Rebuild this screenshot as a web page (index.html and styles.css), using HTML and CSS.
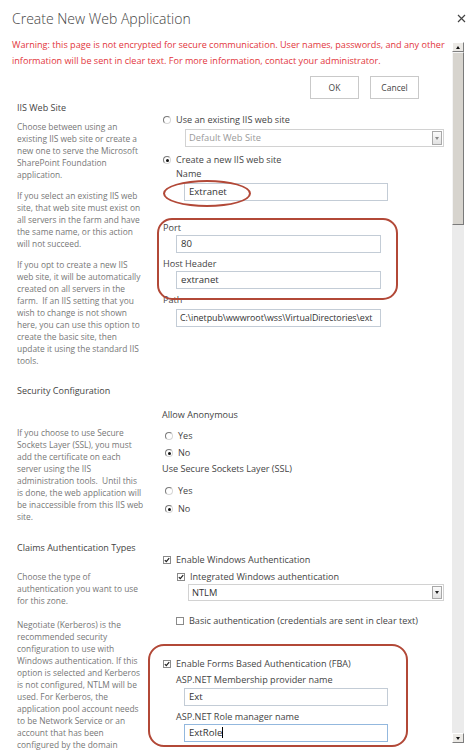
FILE: index.html
```html
<!DOCTYPE html>
<html lang="en">
<head>
<meta charset="utf-8">
<title>Create New Web Application</title>
<link rel="stylesheet" href="styles.css">
</head>
<body>
<div class="dialog">
  <header class="titlebar">
    <h1 class="title">Create New Web Application</h1>
    <svg class="close" width="9" height="9" viewBox="0 0 9 9"><path d="M1 1L8 8M8 1L1 8" stroke="#444" stroke-width="1.2" fill="none"/></svg>
  </header>
  <div class="frame">
    <div class="content">
      <p class="warning">Warning: this page is not encrypted for secure communication. User names, passwords, and any other<br>information will be sent in clear text. For more information, contact your administrator.</p>
      <div class="actions">
        <button class="btn">OK</button>
        <button class="btn">Cancel</button>
      </div>

      <section class="section sec-iis">
        <div class="desc">
          <h2>IIS Web Site</h2>
          <p class="p-first">Choose between using an<br>existing IIS web site or create a<br>new one to serve the Microsoft<br>SharePoint Foundation<br>application.</p>
          <p class="p-next">If you select an existing IIS web<br>site, that web site must exist on<br>all servers in the farm and have<br>the same name, or this action<br>will not succeed.</p>
          <p class="p-next">If you opt to create a new IIS<br>web site, it will be automatically<br>created on all servers in the<br>farm.&nbsp; If an IIS setting that you<br>wish to change is not shown<br>here, you can use this option to<br>create the basic site, then<br>update it using the standard IIS<br>tools.</p>
        </div>
        <div class="fields">
          <div class="opt opt-existing"><span class="radio"></span>Use an existing IIS web site</div>
          <div class="select select-site is-disabled"><span>Default Web Site</span><span class="sel-arrow"></span></div>
          <div class="opt opt-new"><span class="radio checked"></span>Create a new IIS web site</div>
          <div class="label label-name">Name</div>
          <div class="textbox tb-name">Extranet</div>
          <div class="label label-port">Port</div>
          <div class="textbox tb-wide tb-port">80</div>
          <div class="label label-host">Host Header</div>
          <div class="textbox tb-wide tb-port">extranet</div>
          <div class="label label-path">Path</div>
          <div class="textbox tb-wide tb-path">C:\inetpub\wwwroot\wss\VirtualDirectories\ext</div>
          <div class="mark mark-ellipse"></div>
          <div class="mark mark-box1"></div>
        </div>
      </section>

      <section class="section sec-security">
        <div class="desc">
          <h2>Security Configuration</h2>
          <p class="p-sec">If you choose to use Secure<br>Sockets Layer (SSL), you must<br>add the certificate on each<br>server using the IIS<br>administration tools.&nbsp; Until this<br>is done, the web application will<br>be inaccessible from this IIS web<br>site.</p>
        </div>
        <div class="fields">
          <div class="label label-anon">Allow Anonymous</div>
          <div class="opt opt-yes1"><span class="radio"></span>Yes</div>
          <div class="opt opt-no1"><span class="radio checked"></span>No</div>
          <div class="label label-ssl">Use Secure Sockets Layer (SSL)</div>
          <div class="opt opt-yes2"><span class="radio"></span>Yes</div>
          <div class="opt opt-no2"><span class="radio checked"></span>No</div>
        </div>
      </section>

      <section class="section sec-claims">
        <div class="desc">
          <h2>Claims Authentication Types</h2>
          <p class="p-claims1">Choose the type of<br>authentication you want to use<br>for this zone.</p>
          <p class="p-claims2">Negotiate (Kerberos) is the<br>recommended security<br>configuration to use with<br>Windows authentication. If this<br>option is selected and Kerberos<br>is not configured, NTLM will be<br>used. For Kerberos, the<br>application pool account needs<br>to be Network Service or an<br>account that has been<br>configured by the domain<br>administrator. NTLM</p>
        </div>
        <div class="fields">
          <div class="opt opt-win"><span class="check on"><svg viewBox="0 0 6 6" width="6" height="6"><path d="M0.8 3.1L2.3 4.6L5.2 1.1" stroke="#222" stroke-width="1.2" fill="none"/></svg></span>Enable Windows Authentication</div>
          <div class="opt opt-integrated"><span class="check on"><svg viewBox="0 0 6 6" width="6" height="6"><path d="M0.8 3.1L2.3 4.6L5.2 1.1" stroke="#222" stroke-width="1.2" fill="none"/></svg></span>Integrated Windows authentication</div>
          <div class="select select-ntlm"><span>NTLM</span><span class="sel-arrow"></span></div>
          <div class="opt opt-basic"><span class="check"></span>Basic authentication (credentials are sent in clear text)</div>
          <div class="opt opt-fba"><span class="check on"><svg viewBox="0 0 6 6" width="6" height="6"><path d="M0.8 3.1L2.3 4.6L5.2 1.1" stroke="#222" stroke-width="1.2" fill="none"/></svg></span>Enable Forms Based Authentication (FBA)</div>
          <div class="label label-member">ASP.NET Membership provider name</div>
          <div class="textbox tb-name tb-member">Ext</div>
          <div class="label label-role">ASP.NET Role manager name</div>
          <div class="textbox tb-name tb-role is-focused">ExtRole<span class="caret"></span></div>
          <div class="mark mark-box2"></div>
        </div>
      </section>
    </div>
    <div class="scrollbar">
      <div class="sb-btn sb-up"></div>
      <div class="sb-thumb"></div>
      <div class="sb-track"></div>
      <div class="sb-btn sb-down"></div>
    </div>
  </div>
</div>
</body>
</html>
```

FILE: styles.css
```css
* { box-sizing: border-box; }
html, body { margin: 0; padding: 0; }
body {
  width: 474px;
  height: 752px;
  overflow: hidden;
  background: #fff;
  font-family: "Open Sans", "Noto Sans", sans-serif;
  color: #444;
}
.dialog { height: 752px; display: flex; flex-direction: column; }

.titlebar {
  height: 36px;
  flex: none;
  display: flex;
  justify-content: space-between;
  align-items: flex-start;
  padding: 0 8px 0 12px;
}
.title {
  margin: 0;
  padding-top: 8px;
  font-size: 14px;
  font-weight: 300;
  line-height: 22px;
  color: #444;
}
.close { margin-top: 14px; }

.frame { flex: 1; display: flex; min-height: 0; }
.content { flex: 1; min-width: 0; overflow: hidden; }

.warning {
  margin: 1px 0 0 12px;
  font-size: 9.1px;
  line-height: 16px;
  color: #e2353c;
  white-space: nowrap;
}

.actions {
  display: flex;
  justify-content: flex-end;
  gap: 11px;
  margin-top: 7px;
  padding-right: 33px;
}
.btn {
  width: 49px;
  height: 23px;
  padding: 0;
  border: 1px solid #c9c9c9;
  background: #fff;
  font-family: "Open Sans", "Noto Sans", sans-serif;
  font-size: 8.5px;
  color: #444;
}

.section { display: grid; grid-template-columns: 160px 1fr; }
.sec-iis { margin-top: 3px; }
.sec-security { margin-top: 18px; }
.sec-claims { margin-top: 19px; }

.desc {
  padding-left: 17px;
  font-size: 8.4px;
  line-height: 12px;
  color: #777;
  white-space: nowrap;
}
.desc h2 {
  margin: 0;
  font-size: 9px;
  font-weight: normal;
  line-height: 12px;
  color: #444;
}
.desc p { margin: 0; }
.desc .p-first { margin-top: 7px; }
.desc .p-next { margin-top: 9px; }
.desc .p-sec { margin-top: 30px; }
.desc .p-claims1 { margin-top: 17px; }
.desc .p-claims2 { margin-top: 12px; }

.fields {
  position: relative;
  font-size: 9.1px;
  line-height: 12px;
  color: #444;
  white-space: nowrap;
}

.opt { display: flex; align-items: center; height: 12px; padding-left: 3px; }
.label { height: 12px; line-height: 12px; }

.radio {
  flex: none;
  position: relative;
  width: 8px;
  height: 8px;
  margin-right: 5px;
  border-radius: 50%;
  border: 1px solid;
  border-color: #7a7a7a #d6d6d6 #d6d6d6 #7a7a7a;
  background: #fff;
}
.radio.checked::after {
  content: "";
  position: absolute;
  left: 1.5px;
  top: 1.5px;
  width: 3px;
  height: 3px;
  border-radius: 50%;
  background: #111;
}
.check {
  flex: none;
  width: 8px;
  height: 8px;
  margin-right: 5px;
  border: 1px solid #8a8a8a;
  background: #fff;
  display: flex;
  align-items: center;
  justify-content: center;
}
.check svg { display: block; }

.select {
  display: flex;
  align-items: center;
  justify-content: space-between;
  height: 18px;
  padding: 0 1px 0 3px;
  border: 1px solid #d2d2d2;
  background: #fff;
  font-size: 9.3px;
  color: #333;
}
.select.is-disabled { color: #9a9a9a; }
.sel-arrow {
  width: 10px;
  height: 14px;
  border: 1px solid #a8a8a8;
  background: linear-gradient(#fbfbfb, #e2e2e2);
  display: flex;
  align-items: center;
  justify-content: center;
}
.sel-arrow::after {
  content: "";
  border-left: 2.5px solid transparent;
  border-right: 2.5px solid transparent;
  border-top: 3px solid #222;
}
.is-disabled .sel-arrow::after { border-top-color: #8a8a8a; }

.textbox {
  height: 18px;
  padding: 0 4px;
  border: 1px solid #c3ccd6;
  line-height: 16px;
  font-size: 9.6px;
  color: #333;
  overflow: hidden;
  white-space: nowrap;
}
.textbox.is-focused { border-color: #93b8de; }
.caret {
  display: inline-block;
  width: 1px;
  height: 11px;
  background: #000;
  vertical-align: -2px;
}

/* IIS web site fields */
.opt-existing { margin-top: 12px; }
.select-site { margin: 3px 0 0 25px; width: 259px; }
.opt-new { margin-top: 7px; }
.label-name { margin-top: 2px; padding-left: 16px; }
.tb-name { margin: 3px 0 0 24px; width: 204px; }
.label-port { margin-top: 21px; padding-left: 3px; }
.tb-wide { margin-left: 16px; width: 205px; }
.tb-port { margin-top: 1px; }
.label-host { margin-top: 5px; padding-left: 3px; }
.label-path { margin-top: 5px; padding-left: 3px; }
.tb-path { margin-top: 3px; padding: 0 0 0 3px; font-size: 8.9px; letter-spacing: -0.05px; }

/* security fields */
.label-anon { margin-top: 24px; padding-left: 2px; }
.opt-yes1, .opt-no1, .opt-yes2, .opt-no2 { padding-left: 5px; }
.opt-yes1 { margin-top: 9px; }
.opt-no1 { margin-top: 5px; }
.label-ssl { margin-top: 4px; padding-left: 2px; }
.opt-yes2 { margin-top: 10px; }
.opt-no2 { margin-top: 6px; }

/* claims fields */
.opt-win { margin-top: 12px; }
.opt-integrated { margin-top: 5px; padding-left: 17px; }
.select-ntlm { margin: 1px 0 0 28px; width: 256px; height: 17px; }
.select-ntlm .sel-arrow { height: 13px; }
.opt-basic { margin-top: 14px; padding-left: 16px; }
.opt-fba { margin-top: 31px; }
.label-member { margin-top: 4px; padding-left: 16px; }
.tb-member { margin-top: 2px; }
.label-role { margin-top: 5px; padding-left: 16px; }
.tb-role { margin-top: 1px; }

/* red annotation marks drawn over the form */
.mark {
  position: absolute;
  border: 2.5px solid #b24837;
  pointer-events: none;
}
.mark-ellipse { left: 3px; top: 78px; width: 88px; height: 27px; border-radius: 50%; }
.mark-box1 { left: -3px; top: 116px; width: 241px; height: 82px; border-radius: 15px; }
.mark-box2 { left: -12px; top: 102px; width: 260px; height: 103px; border-radius: 16px; }

/* scrollbar */
.scrollbar {
  flex: none;
  width: 12px;
  height: 701px;
  margin: 6px 10px 0 0;
  display: flex;
  flex-direction: column;
}
.sb-btn {
  flex: none;
  height: 10px;
  background: #ebe9e5;
  border: 1px solid;
  border-color: #fff #7e7e7e #7e7e7e #fff;
  display: flex;
  align-items: center;
  justify-content: center;
}
.sb-up::after {
  content: "";
  border-left: 2.5px solid transparent;
  border-right: 2.5px solid transparent;
  border-bottom: 3px solid #111;
}
.sb-down::after {
  content: "";
  border-left: 2.5px solid transparent;
  border-right: 2.5px solid transparent;
  border-top: 3px solid #111;
}
.sb-thumb {
  flex: none;
  height: 173px;
  background: #d7d4ce;
  border: 1px solid;
  border-color: #f4f4f4 #7a7a7a #7a7a7a #f4f4f4;
}
.sb-track { flex: 1; background: #ebebeb; }
```
